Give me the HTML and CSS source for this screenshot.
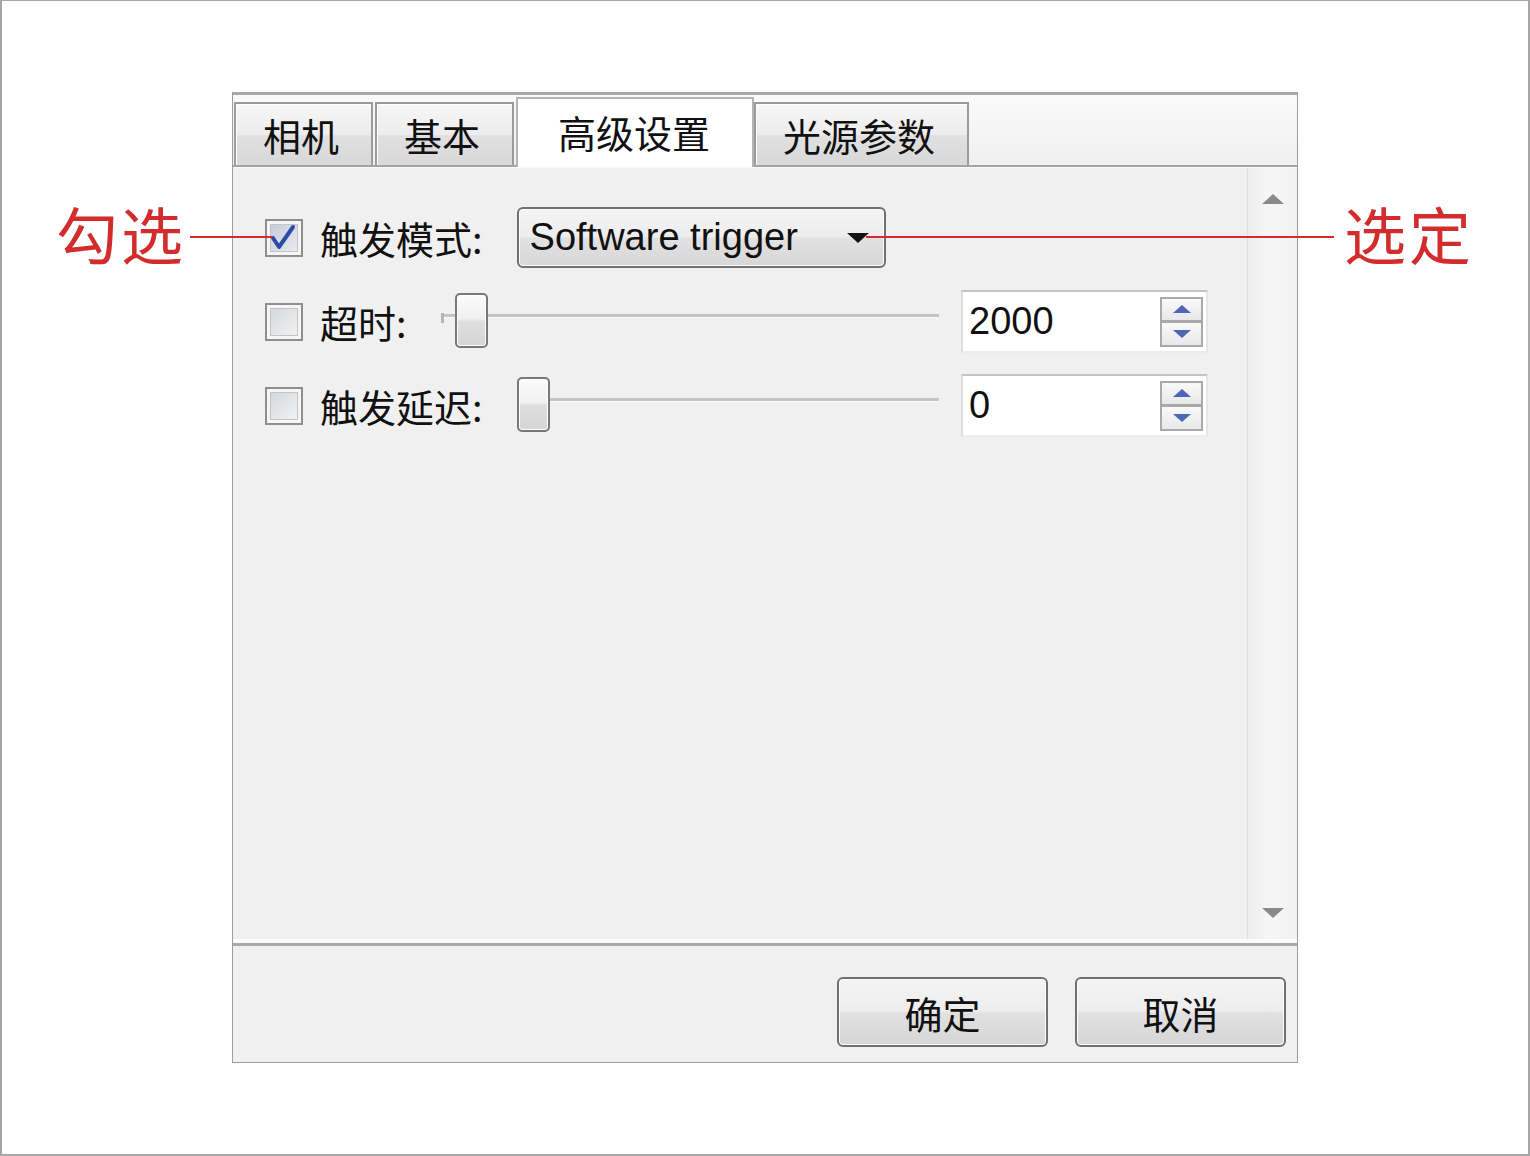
FILE: index.html
```html
<!DOCTYPE html>
<html lang="zh-CN">
<head>
  <meta charset="UTF-8">
  <title>高级设置</title>
  <link rel="stylesheet" href="styles.css">
</head>
<body>
  <div class="page">
    <div class="dialog">
      <div class="tabs">
        <div class="tab">相机</div>
        <div class="tab">基本</div>
        <div class="tab active">高级设置</div>
        <div class="tab">光源参数</div>
      </div>

      <div class="content">
        <div class="settings">
          <div class="row">
            <span class="checkbox checked">
              <svg width="34" height="34" viewBox="0 0 34 34">
                <path d="M6 17 L12 26 L26 6" fill="none" stroke="#2f4aa6" stroke-width="4" stroke-linejoin="round" stroke-linecap="round"/>
              </svg>
            </span>
            <span class="label">触发模式:</span>
            <div class="combo">
              <span>Software trigger</span>
              <span class="combo-arrow"></span>
            </div>
          </div>

          <div class="row">
            <span class="checkbox"></span>
            <span class="label">超时:</span>
            <div class="slider">
              <div class="track"></div>
              <div class="thumb" style="left:2.8%"></div>
            </div>
            <div class="spinbox">
              <span class="value">2000</span>
              <div class="spin"><span class="up"></span><span class="down"></span></div>
            </div>
          </div>

          <div class="row">
            <span class="checkbox"></span>
            <span class="label">触发延迟:</span>
            <div class="slider">
              <div class="track"></div>
              <div class="thumb" style="left:0%"></div>
            </div>
            <div class="spinbox">
              <span class="value">0</span>
              <div class="spin"><span class="up"></span><span class="down"></span></div>
            </div>
          </div>
        </div>

        <div class="scrollbar">
          <span class="arrow-up"></span>
          <span class="arrow-down"></span>
        </div>
      </div>

      <div class="footer">
        <button type="button" class="btn">确定</button>
        <button type="button" class="btn">取消</button>
      </div>
    </div>

    <!-- annotations -->
    <div class="note note-left">勾选</div>
    <div class="lead lead-left"></div>
    <div class="note note-right">选定</div>
    <div class="lead lead-right"></div>
  </div>
</body>
</html>
```

FILE: styles.css
```css
* {
  box-sizing: border-box;
}

body {
  margin: 0;
  font-family: "Noto Sans CJK SC", "Liberation Sans", sans-serif;
  color: #111;
}

.page {
  position: relative;
  width: 1530px;
  height: 1156px;
  padding: 91px 0 0 230px;
  border: solid #a6a6a6;
  border-width: 1px 2px 2px 2px;
  background-color: #fff;
}

.dialog {
  width: 1066px;
  height: 971px;
  display: flex;
  flex-direction: column;
  border: 1px solid #9d9d9d;
  border-top: none;
  background-color: #f0f0f0;
}

/* tabs */
.tabs {
  flex-shrink: 0;
  display: flex;
  align-items: flex-end;
  height: 75px;
  padding-left: 1px;
  border-top: 3px solid #a9a9a9;
  border-bottom: 2px solid #a3a3a3;
  background: linear-gradient(#fafafa, #f0f0f0);
}

.tab {
  height: 63px;
  padding: 0 32px 0 27px;
  margin-right: 2px;
  border: 2px solid #9b9b9b;
  border-bottom: none;
  background: linear-gradient(#f7f7f7, #ececec 50%, #e0e0e0 52%, #d8d8d8);
  box-shadow: inset 1px 1px 0 #fff;
  font-size: 38px;
  line-height: 61px;
  white-space: nowrap;
}

.tab.active {
  height: 70px;
  margin: 0 0 -2px 0;
  padding: 0 42px 0 40px;
  border-color: #b4b4b4;
  background: #fff;
  box-shadow: none;
  line-height: 66px;
}

/* content */
.content {
  flex: 1;
  display: flex;
  border-top: 1px solid #fafafa;
  border-bottom: 4px solid #fbfbfb;
}

.settings {
  flex: 1;
  display: flex;
  flex-direction: column;
  gap: 21px;
  padding: 38px 39px 0 32px;
}

.row {
  display: flex;
  align-items: center;
  height: 63px;
}

.checkbox {
  flex-shrink: 0;
  width: 38px;
  height: 38px;
  margin-right: 17px;
  border: 2px solid #8f8f8f;
  background: linear-gradient(135deg, #d0d3d8, #f6f6f6);
  box-shadow: inset 0 0 0 3px #f5f5f5, inset 0 0 0 4px #c4c4c4;
}

.checkbox.checked {
  background: linear-gradient(135deg, #c2c8d8, #eceef4);
}

.checkbox svg {
  display: block;
}

.label {
  margin-right: 34px;
  font-size: 38px;
  line-height: 1;
  white-space: nowrap;
}

.combo {
  width: 369px;
  height: 61px;
  display: flex;
  align-items: center;
  justify-content: space-between;
  padding: 0 15px 0 11px;
  border: 2px solid #707070;
  border-radius: 6px;
  background: linear-gradient(#f4f4f4, #ededed 48%, #e1e1e1 52%, #d7d7d7);
  box-shadow: inset 0 0 0 1px #fcfcfc;
  font-family: "Liberation Sans", sans-serif;
  font-size: 38px;
}

.combo-arrow {
  width: 0;
  height: 0;
  border-left: 11px solid transparent;
  border-right: 11px solid transparent;
  border-top: 10px solid #111;
}

.slider {
  position: relative;
  flex: 1;
  height: 63px;
  margin-right: 22px;
}

.track {
  position: absolute;
  left: 0;
  right: 0;
  top: 24px;
  height: 3px;
  background-color: #c4c4c4;
  box-shadow: 0 1px 0 #fafafa;
}

.track::before {
  content: "";
  position: absolute;
  left: 0;
  top: -1px;
  width: 3px;
  height: 10px;
  background-color: #b5b5b5;
}

.thumb {
  position: absolute;
  top: 3px;
  width: 33px;
  height: 55px;
  border: 2px solid #787878;
  border-radius: 5px;
  background: linear-gradient(#fbfbfb, #f1f1f1 46%, #dedede 52%, #d5d5d5);
  box-shadow: inset 0 0 0 1px #fdfdfd;
}

.spinbox {
  flex-shrink: 0;
  width: 247px;
  height: 63px;
  display: flex;
  align-items: center;
  justify-content: space-between;
  padding: 0 3px 0 6px;
  border: 2px solid;
  border-color: #c4c4c4 #e6e6e6 #ececec #dcdcdc;
  background-color: #fff;
  font-family: "Liberation Sans", sans-serif;
  font-size: 38px;
}

.spin {
  width: 43px;
  height: 50px;
  display: flex;
  flex-direction: column;
}

.spin span {
  flex: 1;
  display: flex;
  align-items: center;
  justify-content: center;
  border: 2px solid #a9a9a9;
  background: linear-gradient(#f9f9f9, #e8e8e8);
}

.spin span + span {
  border-top: 1px solid #a9a9a9;
}

.spin .up::after,
.spin .down::after {
  content: "";
  border-left: 9px solid transparent;
  border-right: 9px solid transparent;
}

.spin .up::after {
  border-bottom: 8px solid #4d66b6;
}

.spin .down::after {
  border-top: 8px solid #4d66b6;
}

.scrollbar {
  width: 50px;
  display: flex;
  flex-direction: column;
  justify-content: space-between;
  align-items: center;
  padding: 26px 0 21px;
  border-left: 1px solid #e0e0e0;
  background: linear-gradient(90deg, #ededed, #f6f6f6 40%, #f2f2f2);
}

.arrow-up,
.arrow-down {
  width: 0;
  height: 0;
  border-left: 11px solid transparent;
  border-right: 11px solid transparent;
}

.arrow-up {
  border-bottom: 10px solid #8a8a8a;
}

.arrow-down {
  border-top: 10px solid #8a8a8a;
}

/* buttons */
.footer {
  flex-shrink: 0;
  height: 119px;
  display: flex;
  justify-content: flex-end;
  align-items: flex-start;
  gap: 27px;
  padding: 31px 11px 0 0;
  border-top: 3px solid #a9a9a9;
}

.btn {
  width: 211px;
  height: 70px;
  padding: 0;
  border: 2px solid #707070;
  border-radius: 6px;
  background: linear-gradient(#f4f4f4, #ededed 48%, #e1e1e1 52%, #d6d6d6);
  box-shadow: inset 0 0 0 1px #fcfcfc;
  font-family: inherit;
  font-size: 38px;
  color: #111;
}

/* annotations */
.note {
  position: absolute;
  top: 201px;
  font-size: 62px;
  line-height: 62px;
  letter-spacing: 3px;
  color: #d22c2c;
  white-space: nowrap;
}

.note-left {
  left: 54px;
}

.note-right {
  left: 1342px;
}

.lead {
  position: absolute;
  top: 235px;
  height: 2px;
  background-color: #d22c2c;
}

.lead-left {
  left: 188px;
  width: 82px;
}

.lead-right {
  left: 864px;
  width: 468px;
}
```
